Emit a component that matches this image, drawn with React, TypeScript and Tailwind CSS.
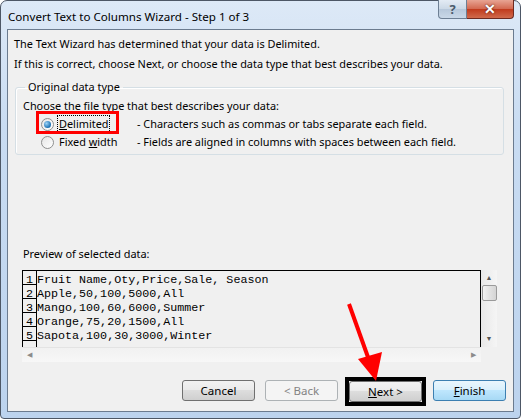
import React from "react";

const ui = { fontFamily: '"Noto Sans", "Open Sans", sans-serif' };
const mono = { fontFamily: '"Liberation Mono", "Courier New", monospace' };

const rows = [
  "Fruit Name,Oty,Price,Sale, Season",
  "Apple,50,100,5000,All",
  "Mango,100,60,6000,Summer",
  "Orange,75,20,1500,All",
  "Sapota,100,30,3000,Winter",
];

function Radio({ checked }: { checked?: boolean }) {
  return (
    <span className="w-[13px] h-[13px] rounded-full border border-[#8e8f8f] bg-gradient-to-br from-[#e6e6e6] to-[#ffffff] flex items-center justify-center shrink-0">
      {checked && (
        <span className="w-[7px] h-[7px] rounded-full bg-[radial-gradient(circle_at_35%_35%,#9cd3f7,#1a70b3_70%,#0d4f8b)]" />
      )}
    </span>
  );
}

function Button({
  children,
  variant,
}: {
  children: React.ReactNode;
  variant?: "disabled" | "default";
}) {
  const base =
    "w-[73px] h-[21px] rounded-[3px] border flex items-center justify-center text-[11.5px]";
  if (variant === "disabled")
    return (
      <div className={`${base} border-[#adb2b5] bg-[#f4f4f4] text-[#838383]`}>
        {children}
      </div>
    );
  if (variant === "default")
    return (
      <div
        className={`${base} border-[#3c7fb1] bg-[linear-gradient(#eaf6fd,#d9f0fc_45%,#bee6fd_50%,#a7d9f5)] text-black`}
      >
        {children}
      </div>
    );
  return (
    <div
      className={`${base} border-[#707070] bg-[linear-gradient(#f2f2f2,#ebebeb_45%,#dddddd_50%,#cfcfcf)] text-black`}
    >
      {children}
    </div>
  );
}

export default function App() {
  return (
    <div className="relative w-[521px] h-[419px] bg-white overflow-hidden" style={ui}>
      {/* window frame */}
      <div className="w-[521px] h-[419px] rounded-t-[7px] rounded-b-[4px] border border-[#4d5766] bg-[linear-gradient(#dde9f7,#c9dcf2_30%,#bcd3ee)] flex flex-col px-[6px] pb-[6px]">
        {/* title bar */}
        <div className="h-[28px] flex items-start shrink-0">
          <div className="pt-[7px] pl-[1px] text-[11.6px] text-black flex-1">
            Convert Text to Columns Wizard - Step 1 of 3
          </div>
          <div className="flex -mt-px">
            <div className="w-[29px] h-[19px] rounded-bl-[4px] border border-[#6d7f94] border-t-0 bg-[linear-gradient(#e3ebf4,#cbd8e6_50%,#b6c7da_50%,#c9d8e8)] flex items-center justify-center text-[#4a5a6b] font-bold text-[13px] leading-none">
              ?
            </div>
            <div className="w-[47px] h-[19px] rounded-br-[4px] border border-[#6e2a20] border-t-0 border-l-0 bg-[linear-gradient(#e8a493,#d2674f_50%,#c0391c_50%,#d06a4c)] flex items-center justify-center text-white font-bold text-[14px] leading-none [text-shadow:0_0_2px_#3a0d05]">
              ✕
            </div>
          </div>
        </div>

        {/* client area */}
        <div className="flex-1 border border-[#6b7b8f] bg-[#f0f0f0] flex flex-col pt-[4px] px-[6px] text-[10.9px] text-black">
          <div className="h-[20px] leading-[20px]">
            The Text Wizard has determined that your data is Delimited.
          </div>
          <div className="h-[20px] leading-[20px]">
            If this is correct, choose Next, or choose the data type that best
            describes your data.
          </div>

          <fieldset className="mt-[5px] ml-px mr-[3px] h-[76px] border border-[#d5dfe5] rounded-[3px] pl-[7px] pr-2 shadow-[inset_1px_1px_0_#ffffff]">
            <legend className="px-[3px] ml-[2px] leading-[16px]">
              Original data type
            </legend>
            <div className="h-[19px] leading-[19px] mt-[1px]">
              Choose the file type that best describes your data:
            </div>
            <div className="flex items-center h-[18px] ml-[18px]">
              <div className="relative flex items-center w-[96px]">
                <Radio checked />
                <span className="ml-[4px] px-px leading-[16px] outline outline-1 outline-dotted outline-black">
                  <span className="underline">D</span>elimited
                </span>
                <div className="absolute -left-[5px] -top-[5px] w-[83px] h-[23px] border-[3px] border-[#ff0000]" />
              </div>
              <span>- Characters such as commas or tabs separate each field.</span>
            </div>
            <div className="flex items-center h-[19px] ml-[18px]">
              <div className="flex items-center w-[96px]">
                <Radio />
                <span className="ml-[5px]">
                  Fixed <span className="underline">w</span>idth
                </span>
              </div>
              <span>- Fields are aligned in columns with spaces between each field.</span>
            </div>
          </fieldset>

          <div className="mt-[91px] ml-[9px] h-[16px] leading-[16px]">
            Preview of selected data:
          </div>

          {/* preview box */}
          <div className="mt-[8px] ml-[8px] flex">
            <div className="flex flex-col">
              <div className="w-[459px] h-[77px] border-t border-l border-r border-black overflow-hidden bg-[#f0f0f0]">
                {[...rows, ""].map((r, i) => (
                  <div key={i} className="flex h-[14px] text-[11.7px] leading-[19px]" style={mono}>
                    <span className="w-[14px] h-[14px] shrink-0 border-r border-b border-black text-center text-[#000]">
                      {i < rows.length ? i + 1 : ""}
                    </span>
                    <span className="whitespace-pre text-black">{r}</span>
                  </div>
                ))}
              </div>
              <div className="w-[459px] h-[15px] bg-[linear-gradient(#f1f1f1,#f7f7f7)] border-t border-[#e3e3e3] flex items-center justify-between px-[5px] text-[#8b8b8b] text-[7px]">
                <span>◀</span>
                <span>▶</span>
              </div>
            </div>
            <div className="w-[16px] h-[77px] bg-[linear-gradient(90deg,#e8e8e8,#f5f5f5)] flex flex-col items-center text-[#555] text-[7px]">
              <span className="mt-[4px] leading-[8px]">▲</span>
              <div className="mt-[3px] w-[15px] h-[16px] rounded-[2px] border border-[#9a9a9a] bg-[linear-gradient(90deg,#f3f3f3,#e2e2e2_50%,#d4d4d4)]" />
              <span className="mt-auto mb-[4px] leading-[8px]">▼</span>
            </div>
          </div>

          {/* buttons */}
          <div className="mt-[18px] flex justify-end gap-[10px] pr-[1px]">
            <Button>Cancel</Button>
            <Button variant="disabled">&lt; Back</Button>
            <div className="border-[4px] border-black -m-[3px] mx-[-3px]">
              <Button>
                <span>
                  <span className="underline">N</span>ext &gt;
                </span>
              </Button>
            </div>
            <Button variant="default">
              <span>
                <span className="underline">F</span>inish
              </span>
            </Button>
          </div>
        </div>
      </div>

      {/* red annotation arrow */}
      <svg className="absolute left-0 top-0 pointer-events-none" width="521" height="419">
        <line x1="349" y1="304" x2="369" y2="360" stroke="#ff0000" strokeWidth="4" />
        <polygon points="376,381 358,359 382,352" fill="#ff0000" />
      </svg>
    </div>
  );
}
